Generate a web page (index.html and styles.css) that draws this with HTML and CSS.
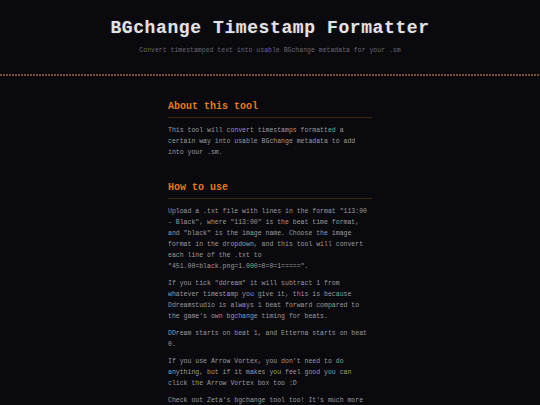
FILE: index.html
```html
<!DOCTYPE html>
<html>
<head>
<meta charset="utf-8">
<link rel="stylesheet" href="styles.css">
</head>
<body>
<header class="site-header">
  <h1 class="title">BGchange Timestamp Formatter</h1>
  <p class="subtitle">Convert timestamped text into usable BGchange metadata for your .sm</p>
</header>
<div class="rule"></div>
<main class="content">
  <section class="section">
    <h2 class="section-title">About this tool</h2>
    <p class="text">This tool will convert timestamps formatted a certain way into usable BGchange metadata to add into your .sm.</p>
  </section>
  <section class="section">
    <h2 class="section-title">How to use</h2>
    <p class="text">Upload a .txt file with lines in the format "113:00 - Black", where "113:00" is the beat time format, and "black" is the image name. Choose the image format in the dropdown, and this tool will convert each line of the .txt to "451.00=black.png=1.000=0=0=1=====".</p>
    <p class="text">If you tick "ddream" it will subtract 1 from whatever timestamp you give it, this is because Ddreamstudio is always 1 beat forward compared to the game's own bgchange timing for beats.</p>
    <p class="text">DDream starts on beat 1, and Etterna starts on beat 0.</p>
    <p class="text">If you use Arrow Vortex, you don't need to do anything, but if it makes you feel good you can click the Arrow Vortex box too :D</p>
    <p class="text">Check out Zeta's bgchange tool too! It's much more advanced and has lots of extra options for you to play with.</p>
  </section>
</main>
</body>
</html>
```

FILE: styles.css
```css
html, body {
  margin: 0;
  padding: 0;
  background: #0a090e;
}
body {
  font-family: "Liberation Mono", "Courier New", monospace;
  color: #9c9ca0;
}
.site-header {
  text-align: center;
  padding: 17px 0 18px;
}
.title {
  margin: 0;
  font-size: 18px;
  line-height: 22px;
  font-weight: bold;
  letter-spacing: 0.6px;
  color: #e2e2e6;
  text-shadow: 0 0 2px rgba(255,255,255,0.2);
}
.subtitle {
  margin: 7px 0 0;
  font-size: 6.5px;
  line-height: 10px;
  color: #686874;
}
.rule {
  height: 2px;
  background: repeating-linear-gradient(90deg, #7a4e34 0 2px, transparent 2px 3px);
}
.content {
  width: 204px;
  margin: 0 auto;
  padding-top: 25px;
}
.section + .section {
  margin-top: 24px;
}
.section-title {
  margin: 0 0 7px;
  font-size: 10px;
  line-height: 12px;
  font-weight: bold;
  color: #e47a26;
  padding-bottom: 4px;
  border-bottom: 1px solid #3a2716;
}
.text {
  margin: 0 0 6px;
  font-size: 6.5px;
  line-height: 11px;
  color: #9a9a9e;
}
```
